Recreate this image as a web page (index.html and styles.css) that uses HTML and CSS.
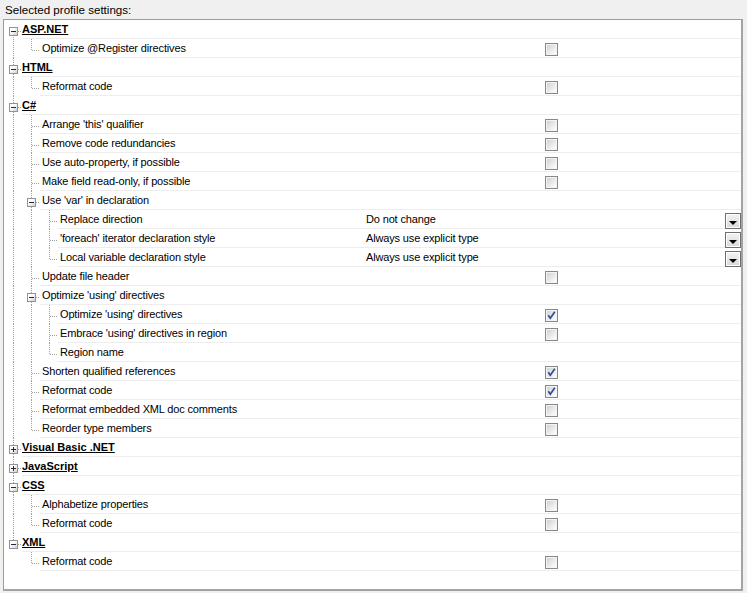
FILE: index.html
```html
<!DOCTYPE html>
<html>
<head>
<meta charset="utf-8">
<link rel="stylesheet" href="styles.css">
</head>
<body>
<div class="title">Selected profile settings:</div>
<div class="panel">
  <div class="row hd"><span class="g r first"><span class="bx"></span></span><div class="main"><span class="lbl">ASP.NET</span></div></div>
  <div class="row"><span class="g v"></span><span class="g l"></span><div class="main"><span class="lbl">Optimize @Register directives</span><span class="val cbv"><span class="cb"></span></span></div></div>
  <div class="row hd"><span class="g r"><span class="bx"></span></span><div class="main"><span class="lbl">HTML</span></div></div>
  <div class="row"><span class="g v"></span><span class="g l"></span><div class="main"><span class="lbl">Reformat code</span><span class="val cbv"><span class="cb"></span></span></div></div>
  <div class="row hd"><span class="g r"><span class="bx"></span></span><div class="main"><span class="lbl">C#</span></div></div>
  <div class="row"><span class="g v"></span><span class="g t"></span><div class="main"><span class="lbl">Arrange 'this' qualifier</span><span class="val cbv"><span class="cb"></span></span></div></div>
  <div class="row"><span class="g v"></span><span class="g t"></span><div class="main"><span class="lbl">Remove code redundancies</span><span class="val cbv"><span class="cb"></span></span></div></div>
  <div class="row"><span class="g v"></span><span class="g t"></span><div class="main"><span class="lbl">Use auto-property, if possible</span><span class="val cbv"><span class="cb"></span></span></div></div>
  <div class="row"><span class="g v"></span><span class="g t"></span><div class="main"><span class="lbl">Make field read-only, if possible</span><span class="val cbv"><span class="cb"></span></span></div></div>
  <div class="row"><span class="g v"></span><span class="g x"><span class="bx"></span></span><div class="main"><span class="lbl">Use 'var' in declaration</span></div></div>
  <div class="row"><span class="g v"></span><span class="g v"></span><span class="g t"></span><div class="main"><span class="lbl">Replace direction</span><span class="val"><span class="cv">Do not change</span><span class="dd"></span></span></div></div>
  <div class="row"><span class="g v"></span><span class="g v"></span><span class="g t"></span><div class="main"><span class="lbl">'foreach' iterator declaration style</span><span class="val"><span class="cv">Always use explicit type</span><span class="dd"></span></span></div></div>
  <div class="row"><span class="g v"></span><span class="g v"></span><span class="g l"></span><div class="main"><span class="lbl">Local variable declaration style</span><span class="val"><span class="cv">Always use explicit type</span><span class="dd"></span></span></div></div>
  <div class="row"><span class="g v"></span><span class="g t"></span><div class="main"><span class="lbl">Update file header</span><span class="val cbv"><span class="cb"></span></span></div></div>
  <div class="row"><span class="g v"></span><span class="g x"><span class="bx"></span></span><div class="main"><span class="lbl">Optimize 'using' directives</span></div></div>
  <div class="row"><span class="g v"></span><span class="g v"></span><span class="g t"></span><div class="main"><span class="lbl">Optimize 'using' directives</span><span class="val cbv"><span class="cb"><svg class="ck" width="11" height="11" viewBox="0 0 11 11"><path d="M2.3 5.2 L4.3 8.2 L8.8 1.8" /></svg></span></span></div></div>
  <div class="row"><span class="g v"></span><span class="g v"></span><span class="g t"></span><div class="main"><span class="lbl">Embrace 'using' directives in region</span><span class="val cbv"><span class="cb"></span></span></div></div>
  <div class="row"><span class="g v"></span><span class="g v"></span><span class="g l"></span><div class="main"><span class="lbl">Region name</span><span class="val"></span></div></div>
  <div class="row"><span class="g v"></span><span class="g t"></span><div class="main"><span class="lbl">Shorten qualified references</span><span class="val cbv"><span class="cb"><svg class="ck" width="11" height="11" viewBox="0 0 11 11"><path d="M2.3 5.2 L4.3 8.2 L8.8 1.8" /></svg></span></span></div></div>
  <div class="row"><span class="g v"></span><span class="g t"></span><div class="main"><span class="lbl">Reformat code</span><span class="val cbv"><span class="cb"><svg class="ck" width="11" height="11" viewBox="0 0 11 11"><path d="M2.3 5.2 L4.3 8.2 L8.8 1.8" /></svg></span></span></div></div>
  <div class="row"><span class="g v"></span><span class="g t"></span><div class="main"><span class="lbl">Reformat embedded XML doc comments</span><span class="val cbv"><span class="cb"></span></span></div></div>
  <div class="row"><span class="g v"></span><span class="g l"></span><div class="main"><span class="lbl">Reorder type members</span><span class="val cbv"><span class="cb"></span></span></div></div>
  <div class="row hd"><span class="g r"><span class="bx plus"></span></span><div class="main"><span class="lbl">Visual Basic .NET</span></div></div>
  <div class="row hd"><span class="g r"><span class="bx plus"></span></span><div class="main"><span class="lbl">JavaScript</span></div></div>
  <div class="row hd"><span class="g r"><span class="bx"></span></span><div class="main"><span class="lbl">CSS</span></div></div>
  <div class="row"><span class="g v"></span><span class="g t"></span><div class="main"><span class="lbl">Alphabetize properties</span><span class="val cbv"><span class="cb"></span></span></div></div>
  <div class="row"><span class="g v"></span><span class="g l"></span><div class="main"><span class="lbl">Reformat code</span><span class="val cbv"><span class="cb"></span></span></div></div>
  <div class="row hd"><span class="g r last"><span class="bx"></span></span><div class="main"><span class="lbl">XML</span></div></div>
  <div class="row"><span class="g b"></span><span class="g l"></span><div class="main"><span class="lbl">Reformat code</span><span class="val cbv"><span class="cb"></span></span></div></div>
</div>
</body>
</html>
```
FILE: styles.css
```css
html, body {
  margin: 0;
  padding: 0;
}
body {
  background: #f0f0f0;
  font-family: "Liberation Sans", Arial, sans-serif;
  font-size: 11px;
  color: #000;
}
.title {
  box-sizing: border-box;
  height: 19px;
  padding: 3px 0 2px 5px;
  line-height: 13px;
  font-size: 11.6px;
}
.panel {
  box-sizing: border-box;
  margin-left: 3px;
  width: 740px;
  height: 572px;
  background: #fff;
  border: 1px solid #9c9c9c;
  border-right: 2px solid #a3a3a3;
  border-bottom: 2px solid #a3a3a3;
}
.row {
  display: flex;
  height: 19px;
}
.g {
  flex: none;
  width: 18px;
  height: 19px;
  position: relative;
}
.g::before {
  content: "";
  position: absolute;
  left: 9px;
  top: 0;
  width: 1px;
  height: 19px;
  background: linear-gradient(#a0a0a0 50%, transparent 50%) 0 0 / 1px 2px repeat-y;
}
.g::after {
  content: "";
  position: absolute;
  left: 10px;
  top: 11px;
  width: 8px;
  height: 1px;
  background: linear-gradient(to right, #a0a0a0 50%, transparent 50%) 0 0 / 2px 1px repeat-x;
}
.g.v::after { display: none; }
.g.b::before, .g.b::after { display: none; }
.g.l::before { height: 12px; }
.g.r::after, .g.x::after {
  left: 14px;
  width: 4px;
}
.g.r.first::before { top: 11px; height: 8px; }
.g.r.last::before { height: 11px; }
.bx {
  position: absolute;
  left: 5px;
  top: 7px;
  width: 9px;
  height: 9px;
  box-sizing: border-box;
  border: 1px solid #939393;
  background: linear-gradient(135deg, #ffffff 35%, #cfcfcf 100%);
  z-index: 1;
}
.bx::before {
  content: "";
  position: absolute;
  left: 1px;
  top: 3px;
  width: 5px;
  height: 1px;
  background: #1f2a44;
}
.bx.plus::after {
  content: "";
  position: absolute;
  left: 3px;
  top: 1px;
  width: 1px;
  height: 5px;
  background: #1f2a44;
}
.main {
  flex: 1;
  min-width: 0;
  display: flex;
  box-sizing: border-box;
  height: 19px;
  border-bottom: 1px solid #ededed;
}
.lbl {
  flex: 1;
  min-width: 0;
  padding-left: 2px;
  line-height: 18px;
  white-space: nowrap;
  letter-spacing: -0.15px;
}
.hd .lbl {
  padding-left: 0;
  font-weight: bold;
  text-decoration: underline;
  letter-spacing: 0;
}
.val {
  flex: none;
  width: 379px;
  display: flex;
  align-items: flex-start;
}
.cbv {
  justify-content: center;
}
.cb {
  box-sizing: border-box;
  width: 13px;
  height: 13px;
  margin-top: 4px;
  border: 1px solid #878888;
  box-shadow: inset 0 0 0 1px #f4f4f4;
  background: linear-gradient(135deg, #d2d2d2 10%, #fbfbfb 85%);
  display: flex;
}
.ck path {
  fill: none;
  stroke: #2f4d9f;
  stroke-width: 1.7;
}
.cv {
  flex: 1;
  padding-left: 4px;
  line-height: 18px;
  white-space: nowrap;
  letter-spacing: -0.15px;
}
.dd {
  flex: none;
  box-sizing: border-box;
  width: 16px;
  height: 16px;
  margin-top: 3px;
  border: 1px solid #6f6f6f;
  box-shadow: inset 0 0 0 1px #ffffff;
  background: linear-gradient(#f3f3f3, #d8d8d8);
  display: flex;
  justify-content: center;
  align-items: flex-start;
  padding-top: 7px;
}
.dd::before {
  content: "";
  width: 0;
  height: 0;
  border-left: 4px solid transparent;
  border-right: 4px solid transparent;
  border-top: 4px solid #000;
}
```
